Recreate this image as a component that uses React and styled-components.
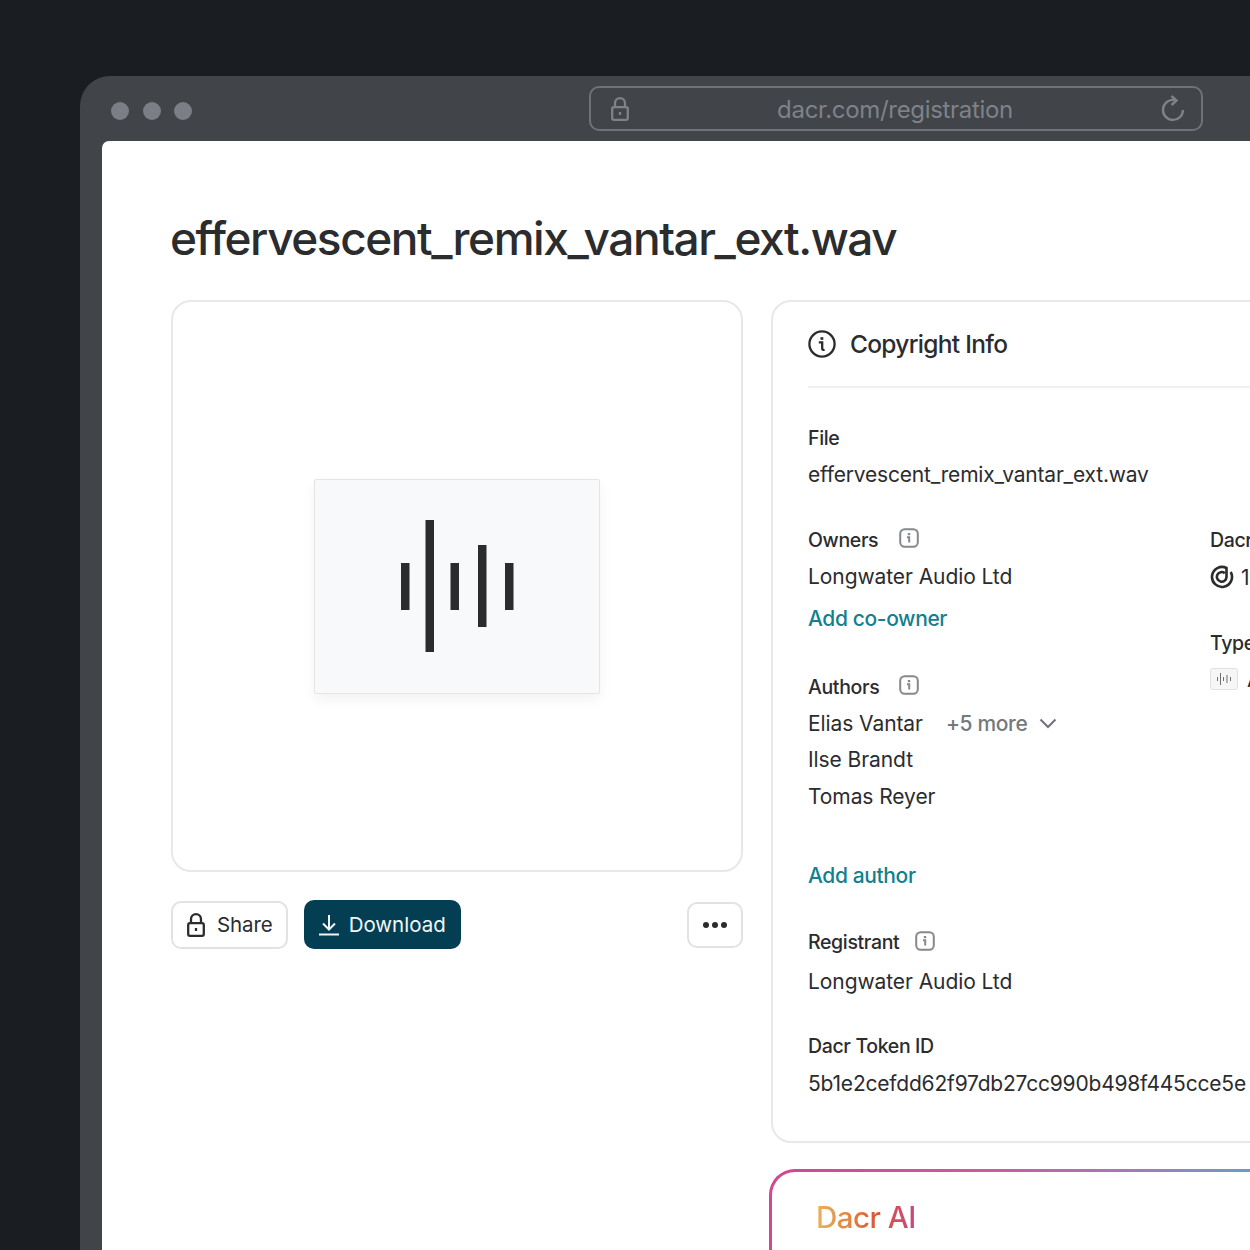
import styled, {createGlobalStyle} from "styled-components";

const textColor = '#2b2c2e';
const linkColor = '#13808f';
const lineColor = '#e8e8e9';

const GlobalStyle = createGlobalStyle`
  html, body {
    margin: 0;
    padding: 0;
    background: #1a1d22;
  }
  * {
    box-sizing: border-box;
  }
`

const Page = styled.div`
  width: 1250px;
  height: 1250px;
  overflow: hidden;
  padding: 76px 0 0 80px;
  font-family: Inter, "Liberation Sans", sans-serif;
  color: ${textColor};
`

const BrowserWindow = styled.div`
  width: 1400px;
  height: 1300px;
  background: #414448;
  border-radius: 30px 0 0 0;
  padding-left: 22px;
`

const TitleBar = styled.div`
  height: 65px;
  display: flex;
  align-items: flex-start;
  margin-left: -22px;
  padding: 10px 0 0 31px;
`

const Dots = styled.div`
  display: flex;
  gap: 13.5px;
  margin-top: 16px;
  margin-right: 397px;
`

const Dot = styled.span`
  width: 18px;
  height: 18px;
  border-radius: 50%;
  background: #7b7e84;
`

const UrlBar = styled.div`
  width: 614px;
  height: 45px;
  border: 2px solid #6f7277;
  border-radius: 10px;
  display: flex;
  align-items: center;
  padding: 0 16px 0 20px;
  color: #7f8288;
`

const UrlText = styled.span`
  flex: 1;
  text-align: center;
  font-size: 24px;
  letter-spacing: -0.32px;
  line-height: 1;
  margin-top: 3px;
`

const Content = styled.main`
  height: 100%;
  background: #fff;
  border-radius: 7px 0 0 0;
  padding: 66px 0 0 69px;
`

const Title = styled.h1`
  margin: 0 0 31px -1px;
  font-size: 46px;
  line-height: 62px;
  font-weight: 500;
  letter-spacing: -1.45px;
  white-space: nowrap;
`

const Columns = styled.div`
  display: flex;
  gap: 28px;
  align-items: flex-start;
`

const LeftColumn = styled.div`
  width: 572px;
  flex: none;
`

const PreviewCard = styled.div`
  height: 572px;
  border: 2px solid ${lineColor};
  border-radius: 20px;
  display: flex;
  align-items: center;
  justify-content: center;
`

const AudioTile = styled.div`
  width: 286px;
  height: 215px;
  background: #f8f9fa;
  border: 1px solid #e4e5e6;
  border-radius: 2px;
  box-shadow: 0 6px 14px rgba(0, 0, 0, .05);
  display: flex;
  align-items: center;
  justify-content: center;
`

const Actions = styled.div`
  display: flex;
  align-items: center;
  gap: 16px;
  margin-top: 28px;
`

const Button = styled.button`
  height: ${({$primary}) => $primary ? '49px' : '48px'};
  display: flex;
  align-items: center;
  gap: ${({$primary}) => $primary ? '9px' : '12px'};
  padding: ${({$primary}) => $primary ? '0 15px 0 14px' : '0 13px 0 14px'};
  font-family: inherit;
  font-size: 20.5px;
  font-weight: 400;
  letter-spacing: ${({$primary}) => $primary ? '0' : '-0.1px'};
  border-radius: 10px;
  border: ${({$primary}) => $primary ? 'none' : `2px solid #e2e2e3`};
  background: ${({$primary}) => $primary ? '#033e52' : '#fff'};
  color: ${({$primary}) => $primary ? '#f1f7f9' : textColor};
`

const MoreButton = styled.button`
  width: 56px;
  height: 46px;
  margin-left: auto;
  border: 2px solid #e2e2e3;
  border-radius: 10px;
  background: #fff;
  display: flex;
  align-items: center;
  justify-content: center;
  gap: 3px;
`

const MoreDot = styled.span`
  width: 6px;
  height: 6px;
  border-radius: 50%;
  background: ${textColor};
`

const RightColumn = styled.div`
  width: 800px;
  flex: none;
`

const InfoCard = styled.section`
  height: 843px;
  border: 2px solid ${lineColor};
  border-radius: 20px;
  padding: 0 0 0 35px;
`

const CardHeader = styled.div`
  height: 86px;
  display: flex;
  align-items: center;
  gap: 14px;
  border-bottom: 2px solid #f0f0f1;
`

const CardTitle = styled.h2`
  margin: 0;
  font-size: 24.5px;
  font-weight: 550;
  letter-spacing: -0.7px;
`

const Fields = styled.div`
  padding-top: 36px;
`

const Label = styled.div`
  display: flex;
  align-items: center;
  gap: ${({$gap}) => $gap || 14}px;
  height: 28px;
  margin-bottom: ${({$after}) => $after || 4}px;
  font-size: 19.5px;
  font-weight: 550;
  letter-spacing: -0.35px;
  white-space: nowrap;
`

const Value = styled.div`
  display: flex;
  align-items: center;
  height: 36.5px;
  font-size: 21px;
  letter-spacing: ${({$spacing}) => $spacing || -0.08}px;
  white-space: nowrap;
`

const Link = styled.a`
  display: block;
  font-size: 21px;
  line-height: 30px;
  font-weight: 500;
  letter-spacing: -0.38px;
  color: ${linkColor};
`

const Field = styled.div`
  margin-top: ${({$top}) => $top || 0}px;
`

const FieldGrid = styled.div`
  display: grid;
  grid-template-columns: 402px 1fr;
  margin-top: 33.5px;
`

const More = styled.span`
  display: flex;
  align-items: center;
  gap: 12px;
  margin-left: 23px;
  font-weight: 500;
  letter-spacing: -0.35px;
  color: #75787d;
`

const TypeTag = styled.span`
  width: 28px;
  height: 22px;
  background: #f6f6f7;
  border: 1px solid #e2e2e3;
  border-radius: 3px;
  display: flex;
  align-items: center;
  justify-content: center;
  margin-right: 9px;
`

const GradientCard = styled.section`
  height: 300px;
  margin-top: 26px;
  margin-left: -2px;
  border: 3px solid transparent;
  border-radius: 26px;
  padding: 25px 0 0 44px;
  background:
    linear-gradient(#fff, #fff) padding-box,
    linear-gradient(90deg, #d0488f 0%, #cd5a9e 28%, #a777b8 44%, #6a9cc6 60%, #4aa6c8 100%) border-box;
`

const GradientTitle = styled.span`
  display: inline-block;
  font-size: 29.5px;
  line-height: 40px;
  font-weight: 500;
  letter-spacing: -0.5px;
  background: linear-gradient(90deg, #e9b35c 0%, #e3813d 35%, #d85a3a 58%, #c8457f 100%);
  -webkit-background-clip: text;
  background-clip: text;
  color: transparent;
`

const InfoSquareSvg = styled.svg`
  margin-bottom: ${({$lift}) => $lift || 0}px;
`

const SwirlSvg = styled.svg`
  margin-right: 7px;
`

const LockIcon = () => (
  <svg width="18" height="24" viewBox="0 0 18 24" fill="none" stroke="currentColor" strokeWidth="2.3">
    <rect x="1.2" y="10.2" width="15.6" height="12.6" rx="1.8"/>
    <path d="M4 10V6.2a5 5 0 0 1 10 0V10"/>
    <path d="M9 15v3"/>
  </svg>
)

const RefreshIcon = () => (
  <svg width="24" height="28" viewBox="0 0 24 28" fill="none" stroke="currentColor" strokeWidth="2.4">
    <path d="M14.5 5.2A10 10 0 1 0 22 15"/>
    <path d="M10.5 1l5 4.5-5 4.5"/>
  </svg>
)

const DownloadIcon = () => (
  <svg width="22" height="22" viewBox="0 0 22 22" fill="none" stroke="currentColor" strokeWidth="2">
    <path d="M11 1v14M5 9.5l6 6 6-6"/>
    <path d="M1 20.5h20"/>
  </svg>
)

const InfoCircle = () => (
  <svg width="28" height="28" viewBox="0 0 28 28" fill="none" stroke={textColor} strokeWidth="2.3">
    <circle cx="14" cy="14" r="12.6"/>
    <path d="M10.8 12.4h3.4V18.4c0 1.3.9 1.7 2.4 1.4"/>
    <path d="M13.9 7.2v2.6" strokeWidth="2.8"/>
  </svg>
)

const InfoSquare = ({lift}) => (
  <InfoSquareSvg $lift={lift} width="20" height="20" viewBox="0 0 20 20" fill="none" stroke="#85888d" strokeWidth="2">
    <rect x="1.2" y="1.2" width="17.6" height="17.6" rx="4.5"/>
    <path d="M8 9.2h2.2V14.5" strokeWidth="2"/>
    <path d="M10 5v2.2" strokeWidth="2.4"/>
  </InfoSquareSvg>
)

const Chevron = () => (
  <svg width="18" height="11" viewBox="0 0 18 11" fill="none" stroke="#6f7277" strokeWidth="2">
    <path d="M1.5 1.5L9 9l7.5-7.5"/>
  </svg>
)

const SwirlIcon = () => (
  <SwirlSvg width="24" height="24" viewBox="0 0 24 24" fill="none" stroke={textColor} strokeWidth="2.6">
    <path d="M20.7 7A10 10 0 1 1 16.5 3V12A4.8 4.8 0 1 1 14.8 8.2"/>
  </SwirlSvg>
)

const WaveForm = () => (
  <svg width="113" height="132" viewBox="0 0 113 132" fill="#2b2c2e">
    <rect x="0" y="43" width="8.5" height="47"/>
    <rect x="24.5" y="0" width="8.5" height="132"/>
    <rect x="49.5" y="43" width="8.5" height="47"/>
    <rect x="77" y="25" width="8.5" height="82"/>
    <rect x="104" y="43" width="8.5" height="47"/>
  </svg>
)

const TinyWave = () => (
  <svg width="14" height="12" viewBox="0 0 14 12" fill="#6d6f73">
    <rect x="0" y="4" width="1" height="4"/>
    <rect x="3" y="0" width="1" height="12"/>
    <rect x="6" y="4" width="1" height="4"/>
    <rect x="9.5" y="2" width="1" height="8"/>
    <rect x="13" y="4" width="1" height="4"/>
  </svg>
)

export default function App() {
  return (
    <Page>
      <GlobalStyle/>
      <BrowserWindow>
        <TitleBar>
          <Dots>
            <Dot/>
            <Dot/>
            <Dot/>
          </Dots>
          <UrlBar>
            <LockIcon/>
            <UrlText>dacr.com/registration</UrlText>
            <RefreshIcon/>
          </UrlBar>
        </TitleBar>
        <Content>
          <Title>effervescent_remix_vantar_ext.wav</Title>
          <Columns>
            <LeftColumn>
              <PreviewCard>
                <AudioTile>
                  <WaveForm/>
                </AudioTile>
              </PreviewCard>
              <Actions>
                <Button>
                  <LockIcon/>
                  Share
                </Button>
                <Button $primary>
                  <DownloadIcon/>
                  Download
                </Button>
                <MoreButton aria-label="More">
                  <MoreDot/>
                  <MoreDot/>
                  <MoreDot/>
                </MoreButton>
              </Actions>
            </LeftColumn>
            <RightColumn>
              <InfoCard>
                <CardHeader>
                  <InfoCircle/>
                  <CardTitle>Copyright Info</CardTitle>
                </CardHeader>
                <Fields>
                  <Field>
                    <Label>File</Label>
                    <Value $spacing={-0.2}>effervescent_remix_vantar_ext.wav</Value>
                  </Field>
                  <FieldGrid>
                    <div>
                      <Label $gap={21}>Owners <InfoSquare lift={4}/></Label>
                      <Value>Longwater Audio Ltd</Value>
                      <Field $top={9.5}>
                        <Link>Add co-owner</Link>
                      </Field>
                      <Field $top={39}>
                        <Label $gap={20}>Authors <InfoSquare lift={4}/></Label>
                        <Value>
                          Elias Vantar
                          <More>+5 more <Chevron/></More>
                        </Value>
                        <Value>Ilse Brandt</Value>
                        <Value>Tomas Reyer</Value>
                      </Field>
                      <Field $top={46.5}>
                        <Link>Add author</Link>
                      </Field>
                    </div>
                    <div>
                      <Label $after={5}>Dacr ID</Label>
                      <Value><SwirlIcon/>1042</Value>
                      <Field $top={33.5}>
                        <Label>Type</Label>
                        <Value><TypeTag><TinyWave/></TypeTag>Audio</Value>
                      </Field>
                    </div>
                  </FieldGrid>
                  <Field $top={37}>
                    <Label $gap={16} $after={7}>Registrant <InfoSquare lift={2}/></Label>
                    <Value>Longwater Audio Ltd</Value>
                  </Field>
                  <Field $top={32.5}>
                    <Label $after={5}>Dacr Token ID</Label>
                    <Value $spacing={-0.2}>5b1e2cefdd62f97db27cc990b498f445cce5e</Value>
                  </Field>
                </Fields>
              </InfoCard>
              <GradientCard>
                <GradientTitle>Dacr AI</GradientTitle>
              </GradientCard>
            </RightColumn>
          </Columns>
        </Content>
      </BrowserWindow>
    </Page>
  );
}
